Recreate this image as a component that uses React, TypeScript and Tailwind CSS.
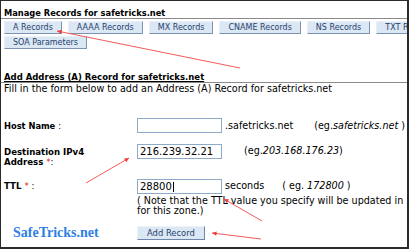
const tabs = ["A Records", "AAAA Records", "MX Records", "CNAME Records", "NS Records", "TXT Records"];

function Tab({ label }: { label: string }) {
  return (
    <div className="h-[13px] shrink-0 whitespace-nowrap border border-t-[#e8f0fa] border-l-[#e8f0fa] border-r-[#7d93b3] border-b-[#7d93b3] bg-[#dce7f4] px-[8px] text-[8px] leading-[11px] text-[#243f6e]">
      {label}
    </div>
  );
}

function Arrow({ x1, y1, x2, y2 }: { x1: number; y1: number; x2: number; y2: number }) {
  const a = Math.atan2(y2 - y1, x2 - x1);
  const l = 5;
  const p1 = `${x2 - l * Math.cos(a - 0.45)},${y2 - l * Math.sin(a - 0.45)}`;
  const p2 = `${x2 - l * Math.cos(a + 0.45)},${y2 - l * Math.sin(a + 0.45)}`;
  return (
    <g>
      <line x1={x1} y1={y1} x2={x2} y2={y2} stroke="#f25b5b" strokeWidth="1" />
      <polygon points={`${x2},${y2} ${p1} ${p2}`} fill="#f03c3c" />
    </g>
  );
}

export default function App() {
  return (
    <div className="relative h-[250px] w-[410px] overflow-hidden bg-white font-['DejaVu_Sans',sans-serif] text-black">
      <div className="h-[249px] w-[409px] overflow-hidden border-t border-l border-r-2 border-b-2 border-[#2a2a2a]">
        {/* Manage records header */}
        <div className="border-b border-[#8a8a8a] px-[3px] pt-[7px] text-[8.3px] font-bold leading-[10px]">
          Manage Records for safetricks.net
        </div>
        <div className="flex gap-[6px] overflow-hidden pl-[3px] pt-[2px]">
          {tabs.map((t) => (
            <Tab key={t} label={t} />
          ))}
        </div>
        <div className="flex pl-[3px] pt-[2px]">
          <Tab label="SOA Parameters" />
        </div>

        {/* Add address section */}
        <div className="mt-[23px] border-b border-[#8a8a8a] px-[3px] text-[8.5px] font-bold leading-[10px]">
          <span className="underline">Add Address (A) Record for safetricks.net</span>
        </div>
        <div className="whitespace-nowrap px-[3px] text-[9.6px] leading-[11px]">
          Fill in the form below to add an Address (A) Record for safetricks.net
        </div>

        <div className="mt-[24px] grid grid-cols-[136px_1fr] text-[9.6px] leading-[10px]">
          <div className="flex items-center pl-[3px] text-[8.3px] font-bold">
            Host Name <span className="ml-[3px] font-normal">:</span>
          </div>
          <div className="flex items-center whitespace-nowrap">
            <div className="h-[15px] w-[85px] shrink-0 border border-[#8fa9c9] bg-white" />
            <span className="ml-[3px]">.safetricks.net</span>
            <span className="ml-[21px]">
              (eg.<i>safetricks.net</i> )
            </span>
          </div>

          <div className="mt-[11px] pl-[3px] pt-[3px] text-[8.6px] font-bold leading-[10px]">
            Destination IPv4
            <br />
            Address <span className="font-normal text-[#e02020]">*</span>
            <span className="font-normal">:</span>
          </div>
          <div className="mt-[11px] flex items-start whitespace-nowrap">
            <div className="h-[15px] w-[85px] shrink-0 border border-[#8fa9c9] bg-white px-[2px] text-[10px] leading-[13px]">
              216.239.32.21
            </div>
            <span className="ml-[22px] mt-[2px]">
              (eg.<i>203.168.176.23</i>)
            </span>
          </div>

          <div className="mt-[12px] pl-[3px] pt-[2px] text-[8.6px] font-bold">
            TTL <span className="font-normal text-[#e02020]">*</span>
            <span className="font-normal"> :</span>
          </div>
          <div className="mt-[12px]">
            <div className="flex items-start whitespace-nowrap">
              <div className="flex h-[15px] w-[85px] shrink-0 items-center border border-[#8fa9c9] bg-white px-[2px] text-[10px] leading-[13px]">
                28800<span className="ml-[1px] inline-block h-[10px] w-px bg-black" />
              </div>
              <span className="ml-[3px] mt-[2px]">seconds</span>
              <span className="ml-[18px] mt-[2px]">
                ( eg. <i>172800</i> )
              </span>
            </div>
            <div className="mt-[2px] whitespace-nowrap leading-[9.5px]">
              ( Note that the TTL value you specify will be updated in
              <br />
              for this zone.)
            </div>
          </div>

          <div className="mt-[10px] flex items-end whitespace-nowrap pl-[12px] font-['Liberation_Serif',serif] text-[14px] font-bold leading-[14px] text-[#2f7fe4]">
            SafeTricks.net
          </div>
          <div className="mt-[11px]">
            <div className="inline-block h-[14px] border border-t-[#eef3fa] border-l-[#eef3fa] border-r-[#6f87aa] border-b-[#6f87aa] bg-[#dce7f4] px-[9px] text-[8.4px] leading-[12px] text-[#243f6e]">
              Add Record
            </div>
          </div>
        </div>
      </div>

      <svg className="pointer-events-none absolute left-0 top-0" width="410" height="250">
        <Arrow x1={240} y1={68} x2={57} y2={31} />
        <Arrow x1={86} y1={183} x2={129} y2={158} />
        <Arrow x1={262} y1={221} x2={224} y2={199} />
        <Arrow x1={261} y1={239} x2={212} y2={233} />
      </svg>
    </div>
  );
}
